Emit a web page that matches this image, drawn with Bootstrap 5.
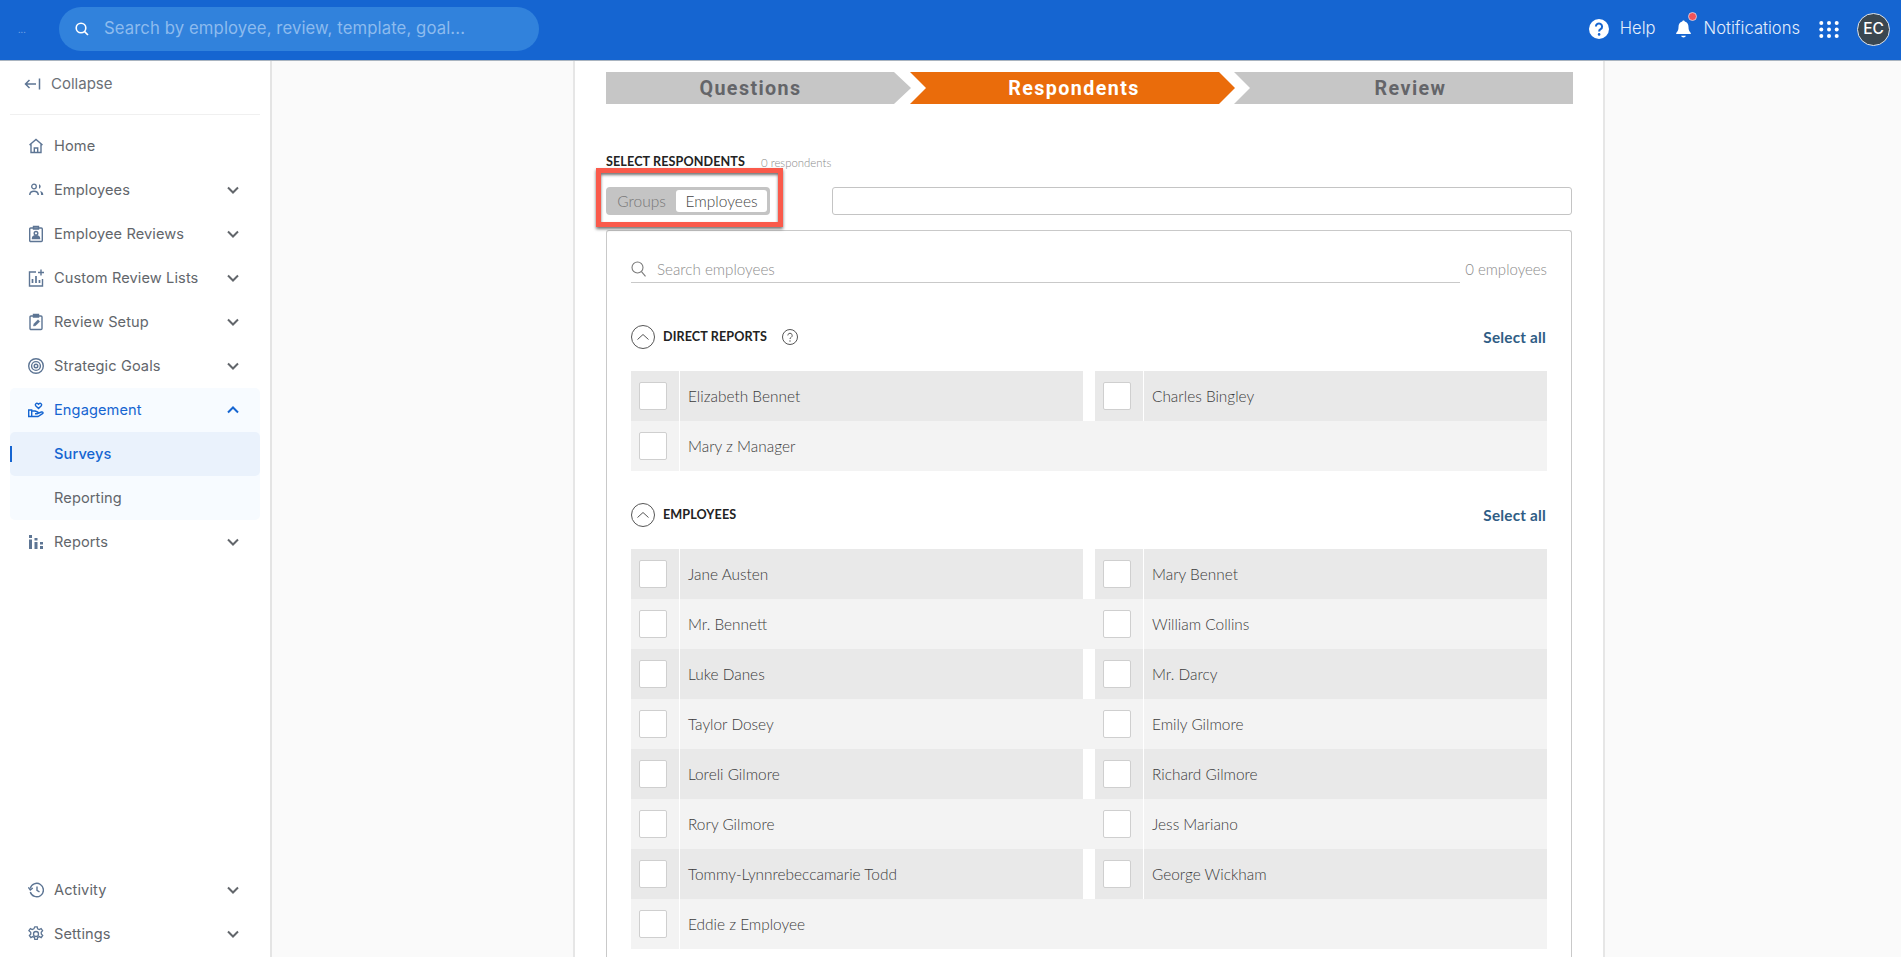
<!DOCTYPE html>
<html lang="en">
<head>
<meta charset="utf-8">
<title>Survey respondents</title>
<link href="https://cdn.jsdelivr.net/npm/bootstrap@5.3.0/dist/css/bootstrap.min.css" rel="stylesheet">
<style>
html,body{height:100%;overflow:hidden}
body{font-family:"Inter","Liberation Sans",sans-serif;background:#fafafa}
.topbar{height:61px;background:#1565d1;border-bottom:1px solid #a9b4c0;padding:0 11px 2px 0;flex-wrap:nowrap}
.logo-dots{width:59px;padding-left:18px;font-size:9px;color:#6f9fe3;line-height:1}
.searchpill{width:480px;height:44px;border-radius:22px;background:#3182dc;padding-left:16px;gap:15px}
.searchpill input{background:transparent;border:0;outline:0;width:420px;padding:0;font-size:16.7px;font-weight:400;color:#fff;letter-spacing:.1px}
.searchpill input::placeholder{color:#8dbbee;opacity:1}
.toplink{color:#e4eefb;font-size:16.6px;font-weight:300;text-decoration:none;position:relative;top:-1px}
.avatar-c{width:33px;height:33px;border-radius:50%;background:#3a4750;border:1px solid #dfe6ee;color:#fff;font-size:15.5px;font-weight:500;line-height:1}
.shell{height:calc(100vh - 61px)}
.sidemenu{width:272px;flex:none;background:#fff;border-right:2px solid #e4e4e4}
.collapse-row{height:54px;margin:0 10px;border-bottom:1px solid #f0f0f0;padding-left:14px;gap:10px;color:#6b7077;font-size:15px;padding-bottom:7px}
.menu-list{margin-top:9px}
.menu-row{height:44px;padding:0 30px 0 28px;color:#62666b;font-size:14.6px;text-decoration:none;gap:10px;letter-spacing:.1px}
.menu-row .ico{width:16px;height:18px;flex:none;color:#5d7594}
.menu-row .lbl{flex:1;padding-top:2px}
.menu-row .chev{width:12px;height:8px;flex:none;margin-right:1px}
.menu-open{background:#f7fbff;border-radius:5px;margin:0 10px}
.menu-open .menu-row{padding:0 20px 0 18px}
.menu-open .menu-row.is-blue,.menu-open .menu-row.is-blue .ico{color:#1565d1}
.menu-open .menu-row.sub-row{padding-left:44px}
.sub-row{position:relative}
.sub-on{background:#eaf2fc;border-radius:5px;color:#1565d1}
.sub-on::before{content:"";position:absolute;left:0;top:14px;width:2px;height:16px;background:#1565d1}
.main-pane{background:#fafafa;min-width:0;overflow:hidden}
.sheet{width:1032px;margin-left:301px;min-height:100%;background:#fff;border-left:2px solid #e6e6e6;border-right:2px solid #e6e6e6;padding:11px 31px 0 31px;font-family:"Lato","Liberation Sans",sans-serif}
.stepper{display:flex;height:32px}
.stepitem{height:32px;display:flex;align-items:center;justify-content:center;font-family:"Roboto","Liberation Sans",sans-serif;font-weight:700;font-size:19.7px;letter-spacing:1.4px;background:#c6c6c6;color:#646569;margin-right:-1px;padding-top:2px}
.st1{width:305px;padding-right:16px;clip-path:polygon(0 0,288px 0,100% 50%,288px 100%,0 100%)}
.st2{width:325px;padding-left:3px;background:#ea6c0b;color:#fff;clip-path:polygon(0 0,309px 0,100% 50%,309px 100%,0 100%,16px 50%)}
.st3{width:339px;padding-left:14px;clip-path:polygon(0 0,100% 0,100% 100%,0 100%,16px 50%)}
.resp-head{margin-top:50px;height:17px;gap:16px}
.resp-title{font-size:12.6px;font-weight:700;color:#222;letter-spacing:.1px;font-family:"Lato",sans-serif}
.resp-count{font-size:11.4px;font-weight:300;color:#8a8a8a}
.chooser{margin-top:16px;height:28px;gap:62px}
.togglewrap{position:relative;width:164px;height:28px;background:#c4c4c4;border-radius:4px;padding:3px;font-size:15.5px;font-weight:300}
.togglewrap .tg-a{width:66px;color:#777;text-align:center;line-height:22px}
.togglewrap .tg-b{width:92px;margin-left:2px;background:#fff;border-radius:3px;color:#444;text-align:center;line-height:22px}
.redbox{position:absolute;left:-10px;top:-19px;width:187px;height:59px;border:5px solid #fa5a4b;box-shadow:0 2px 3px rgba(0,0,0,.55),inset 0 2px 3px rgba(0,0,0,.55);pointer-events:none}
.pickfield{flex:1;height:28px;border:1px solid #c4c4c4;border-radius:3px;background:#fff;box-shadow:none}
.picker{margin-top:15px;border:1px solid #c9c9c9;border-bottom:0;border-radius:3px 3px 0 0;padding:23px 24px 0 24px;height:800px}
.findrow{height:29px;gap:4px}
.findbox{flex:1;border-bottom:1px solid #c9c9c9;gap:11px;height:29px;padding-top:2px}
.findbox input{border:0;outline:0;flex:1;padding:0;font-size:15.2px;font-weight:300;font-family:inherit;background:transparent}
.findbox input::placeholder{color:#8c8c8c;opacity:1}
.findcount{font-size:15px;font-weight:300;color:#8a8a8a;width:83px;text-align:right;white-space:nowrap;padding-top:2px}
.sec-head{height:24px;gap:8px}
.sec-name{font-size:12.6px;font-weight:700;color:#222;letter-spacing:.1px}
.sel-all{font-size:15.3px;font-weight:700;color:#2f5d85;text-decoration:none;letter-spacing:.2px;margin-right:1px}
.sec-a{margin-top:42px}
.sec-b{margin-top:32px}
.people{margin-top:22px}
.people-a{margin-top:22px}
.folk{display:grid;grid-template-columns:452px 452px;column-gap:12px;height:50px}
.folk.lt{background:#f3f3f3}
.folk.dk .who{background:#e9e9e9}
.who{display:flex;align-items:stretch;height:50px}
.tick{width:49px;flex:none;border-right:1px solid #fff;display:flex;align-items:center;padding-left:8px}
.tick i{display:block;width:28px;height:28px;background:#fff;border:1px solid #cfcfcf;border-radius:2px}
.whoname{padding-left:8px;padding-top:2px;font-size:15.4px;font-weight:300;color:#3b3b3b;display:flex;align-items:center}
</style>
</head>
<body>
<nav class="navbar topbar d-flex align-items-center">
  <div class="d-flex align-items-center">
    <div class="logo-dots">...</div>
    <div class="searchpill d-flex align-items-center">
      <svg width="14" height="14" viewBox="0 0 14 14" fill="none" stroke="#fff" stroke-width="1.6"><circle cx="6" cy="6" r="4.8"/><path d="M9.6 9.6 13 13"/></svg>
      <input type="text" placeholder="Search by employee, review, template, goal...">
    </div>
  </div>
  <div class="d-flex align-items-center">
    <svg width="20" height="20" viewBox="0 0 20 20"><circle cx="10" cy="10" r="10" fill="#fff"/><path d="M6.9 7.6a3.1 3.1 0 1 1 4.7 2.6c-1 .6-1.5 1.1-1.5 2.2" fill="none" stroke="#1565d1" stroke-width="2"/><circle cx="10.1" cy="15.4" r="1.3" fill="#1565d1"/></svg>
    <a href="#" class="toplink" style="margin-left:11px">Help</a>
    <span class="position-relative d-inline-flex" style="margin-left:19px">
      <svg width="17" height="20" viewBox="0 0 17 20" fill="#fff"><path d="M8.5 1.5c.7 0 1.2.5 1.3 1.100 2.500.6 3.700 2.900 3.700 5.400 0 3 .8 4.500 2.300 6v1H1.200v-1C2.700 12.500 3.500 11 3.500 8c0-2.500 1.200-4.800 3.700-5.400.1-.6.600-1.100 1.300-1.100z"/><path d="M6.200 16.800h4.600c-.2 1-1.100 1.700-2.300 1.700s-2.100-.7-2.300-1.700z"/></svg>
      <svg class="position-absolute" style="top:-7px;right:-5px" width="9" height="9" viewBox="0 0 9 9"><circle cx="4.500" cy="4.500" r="4" fill="#f0535a" stroke="#e8eefa" stroke-width=".7"/></svg>
    </span>
    <a href="#" class="toplink" style="margin-left:12px">Notifications</a>
    <svg style="margin-left:19px" width="20" height="17" viewBox="0 0 20 17" fill="#fff"><circle cx="2.300" cy="2" r="2"/><circle cx="10" cy="2" r="2"/><circle cx="17.700" cy="2" r="2"/><circle cx="2.300" cy="8.500" r="2"/><circle cx="10" cy="8.500" r="2"/><circle cx="17.700" cy="8.500" r="2"/><circle cx="2.300" cy="15" r="2"/><circle cx="10" cy="15" r="2"/><circle cx="17.700" cy="15" r="2"/></svg>
    <div class="avatar-c d-flex align-items-center justify-content-center" style="margin-left:18px">EC</div>
  </div>
</nav>
<div class="shell d-flex">
  <aside class="sidemenu d-flex flex-column">
    <div class="collapse-row d-flex align-items-center">
      <svg width="17" height="12" viewBox="0 0 17 12" fill="none" stroke="#5d7594" stroke-width="1.500"><path d="M12 6H1.500M5.500 2 1.500 6l4 4M15.500 .5v11"/></svg>
      <span>Collapse</span>
    </div>
    <div class="menu-list flex-grow-1 d-flex flex-column">
      <a href="#" class="menu-row d-flex align-items-center">
        <svg class="ico" viewBox="0 0 16 18" fill="none" stroke="currentColor" stroke-width="1.400"><path d="M1.500 8 8 2.500 14.500 8M3 7v8.500h10V7M6.300 15.500V11h3.400v4.500"/></svg>
        <span class="lbl">Home</span>
      </a>
      <a href="#" class="menu-row d-flex align-items-center">
        <svg class="ico" viewBox="0 0 16 18" fill="currentColor"><circle cx="6" cy="5.500" r="2.300" fill="none" stroke="currentColor" stroke-width="1.300"/><path d="M11 3.300a2.300 2.300 0 0 1 0 4.400z"/><path d="M1 14c0-3 2-4.400 5-4.400s5 1.400 5 4.400h-1.500c0-1.900-1.300-3-3.500-3s-3.500 1.100-3.500 3z"/><path d="M12 10c2 .3 3.300 1.500 3.300 4h-2.200c0-1.700-.4-3-1.100-4z"/></svg>
        <span class="lbl">Employees</span>
        <svg class="chev" viewBox="0 0 12 8" fill="none" stroke="currentColor" stroke-width="2"><path d="m1 1.500 5 5 5-5"/></svg>
      </a>
      <a href="#" class="menu-row d-flex align-items-center">
        <svg class="ico" viewBox="0 0 16 18" fill="none" stroke="currentColor" stroke-width="1.400"><rect x="1.700" y="3" width="12.600" height="13.500" rx="1"/><path d="M5.500 1.500h5V4h-5z"/><circle cx="8" cy="8.300" r="1.800"/><path d="M4.500 13.500h7c0-1.800-1.500-2.800-3.500-2.800s-3.500 1-3.500 2.800z" fill="currentColor"/></svg>
        <span class="lbl">Employee Reviews</span>
        <svg class="chev" viewBox="0 0 12 8" fill="none" stroke="currentColor" stroke-width="2"><path d="m1 1.500 5 5 5-5"/></svg>
      </a>
      <a href="#" class="menu-row d-flex align-items-center">
        <svg class="ico" viewBox="0 0 16 18" fill="none" stroke="currentColor" stroke-width="1.400"><path d="M8 3H1.500v14h13v-7"/><path d="M4.500 14V10M8 14V7M11.500 14v-3" stroke-width="1.700"/><path d="M13 .5v6M10 3.500h6"/></svg>
        <span class="lbl">Custom Review Lists</span>
        <svg class="chev" viewBox="0 0 12 8" fill="none" stroke="currentColor" stroke-width="2"><path d="m1 1.500 5 5 5-5"/></svg>
      </a>
      <a href="#" class="menu-row d-flex align-items-center">
        <svg class="ico" viewBox="0 0 16 18" fill="none" stroke="currentColor" stroke-width="1.400"><rect x="2" y="3" width="12" height="13.500" rx="1"/><path d="M5.500 1.500h5V4h-5z" fill="currentColor"/><path d="m5.500 13 .5-2.200 4-4 1.700 1.700-4 4z" fill="currentColor" stroke-width=".6"/></svg>
        <span class="lbl">Review Setup</span>
        <svg class="chev" viewBox="0 0 12 8" fill="none" stroke="currentColor" stroke-width="2"><path d="m1 1.500 5 5 5-5"/></svg>
      </a>
      <a href="#" class="menu-row d-flex align-items-center">
        <svg class="ico" viewBox="0 0 16 18" fill="none" stroke="currentColor" stroke-width="1.400"><circle cx="8" cy="9" r="7.300"/><circle cx="8" cy="9" r="4.400"/><circle cx="8" cy="9" r="1.800"/></svg>
        <span class="lbl">Strategic Goals</span>
        <svg class="chev" viewBox="0 0 12 8" fill="none" stroke="currentColor" stroke-width="2"><path d="m1 1.500 5 5 5-5"/></svg>
      </a>
      <div class="menu-open">
        <a href="#" class="menu-row is-blue d-flex align-items-center">
          <svg class="ico" viewBox="0 0 16 18" fill="none" stroke="currentColor" stroke-width="1.400"><path d="M10.500 7.500 7.700 4.700c-1.200-1.500.9-3.300 2.300-1.900l.5.500.5-.5c1.400-1.400 3.500.4 2.300 1.900z"/><path d="M.7 9h3v6.500h-3zM3.700 10h3.500l2.300 1c1 .5.600 1.900-.5 1.800H7M9.500 12.500l4-1.500c1.300-.4 2 1 1 1.700l-4.500 2.800H3.700"/></svg>
          <span class="lbl">Engagement</span>
          <svg class="chev" viewBox="0 0 12 8" fill="none" stroke="currentColor" stroke-width="2"><path d="m1 6.500 5-5 5 5"/></svg>
        </a>
        <a href="#" class="menu-row sub-row sub-on d-flex align-items-center"><span class="lbl" style="font-weight:500">Surveys</span></a>
        <a href="#" class="menu-row sub-row d-flex align-items-center"><span class="lbl">Reporting</span></a>
      </div>
      <a href="#" class="menu-row d-flex align-items-center">
        <svg class="ico" viewBox="0 0 16 18" fill="currentColor"><rect x="1" y="2" width="3" height="3"/><rect x="1" y="6.500" width="3" height="9.500"/><rect x="6.500" y="5" width="3" height="2.500"/><rect x="6.500" y="9" width="3" height="7"/><rect x="12" y="9" width="3" height="2.500"/><rect x="12" y="13" width="3" height="3"/></svg>
        <span class="lbl">Reports</span>
        <svg class="chev" viewBox="0 0 12 8" fill="none" stroke="currentColor" stroke-width="2"><path d="m1 1.500 5 5 5-5"/></svg>
      </a>
      <a href="#" class="menu-row d-flex align-items-center mt-auto">
        <svg class="ico" viewBox="0 0 16 18" fill="none" stroke="currentColor" stroke-width="1.400"><path d="M2.300 11A6.700 6.700 0 1 0 2.200 7.500"/><path d="M.3 6.300 2.300 9l2.500-2" /><path d="M9 5.500V9.300l2.500 1.700"/></svg>
        <span class="lbl">Activity</span>
        <svg class="chev" viewBox="0 0 12 8" fill="none" stroke="currentColor" stroke-width="2"><path d="m1 1.500 5 5 5-5"/></svg>
      </a>
      <a href="#" class="menu-row d-flex align-items-center" style="margin-bottom:1px">
        <svg class="ico" viewBox="0 0 16 18" fill="none" stroke="currentColor" stroke-width="1.300"><path d="M6.800 1.800h2.400l.4 2 1.700.8 1.800-1 1.500 2.100-1.400 1.500.1 1.800 1.400 1.500-1.500 2.100-1.800-1-1.700.8-.4 2H6.800l-.4-2-1.700-.8-1.800 1-1.500-2.100 1.400-1.500-.1-1.800L.9 5.700l1.500-2.100 1.800 1 1.700-.8z"/><circle cx="8" cy="9" r="2.500"/></svg>
        <span class="lbl">Settings</span>
        <svg class="chev" viewBox="0 0 12 8" fill="none" stroke="currentColor" stroke-width="2"><path d="m1 1.500 5 5 5-5"/></svg>
      </a>
    </div>
  </aside>
  <main class="main-pane flex-grow-1">
    <div class="sheet">
      <div class="stepper">
        <div class="stepitem st1">Questions</div>
        <div class="stepitem st2">Respondents</div>
        <div class="stepitem st3">Review</div>
      </div>
      <div class="resp-head d-flex align-items-center">
        <span class="resp-title">SELECT RESPONDENTS</span>
        <span class="resp-count">0 respondents</span>
      </div>
      <div class="chooser d-flex">
        <div class="togglewrap d-flex flex-none">
          <div class="tg-a">Groups</div>
          <div class="tg-b">Employees</div>
          <div class="redbox"></div>
        </div>
        <input class="form-control pickfield" type="text" aria-label="Respondents">
      </div>
      <div class="picker">
        <div class="findrow d-flex align-items-center">
          <div class="findbox d-flex align-items-center">
            <svg width="15" height="16" viewBox="0 0 15 16" fill="none" stroke="#7a7a7a" stroke-width="1.100"><circle cx="6.500" cy="6.500" r="5.500"/><path d="m10.500 10.700 4 4.700"/></svg>
            <input type="text" placeholder="Search employees">
          </div>
          <div class="findcount">0 employees</div>
        </div>
        <div class="sec-head sec-a d-flex align-items-center">
          <svg width="24" height="24" viewBox="0 0 24 24" fill="none" stroke="#555" stroke-width="1"><circle cx="12" cy="12" r="11.500"/><path d="m6.500 14.500 5.500-5 5.500 5"/></svg>
          <span class="sec-name">DIRECT REPORTS</span>
          <svg style="margin-left:7px" width="16" height="16" viewBox="0 0 16 16" fill="none" stroke="#555" stroke-width="1"><circle cx="8" cy="8" r="7.500"/><path d="M5.800 6.400a2.200 2.200 0 1 1 3.400 1.900c-.8.500-1.200.8-1.200 1.700"/><circle cx="8" cy="12" r=".7" fill="#555" stroke="none"/></svg>
          <a href="#" class="sel-all ms-auto">Select all</a>
        </div>
        <div class="people-a">
          <div class="folk dk">
            <div class="who"><div class="tick"><i></i></div><div class="whoname">Elizabeth Bennet</div></div>
            <div class="who"><div class="tick"><i></i></div><div class="whoname">Charles Bingley</div></div>
          </div>
          <div class="folk lt">
            <div class="who"><div class="tick"><i></i></div><div class="whoname">Mary z Manager</div></div>
          </div>
        </div>
        <div class="sec-head sec-b d-flex align-items-center">
          <svg width="24" height="24" viewBox="0 0 24 24" fill="none" stroke="#555" stroke-width="1"><circle cx="12" cy="12" r="11.500"/><path d="m6.500 14.500 5.500-5 5.500 5"/></svg>
          <span class="sec-name">EMPLOYEES</span>
          <a href="#" class="sel-all ms-auto">Select all</a>
        </div>
        <div class="people">
          <div class="folk dk">
            <div class="who"><div class="tick"><i></i></div><div class="whoname">Jane Austen</div></div>
            <div class="who"><div class="tick"><i></i></div><div class="whoname">Mary Bennet</div></div>
          </div>
          <div class="folk lt">
            <div class="who"><div class="tick"><i></i></div><div class="whoname">Mr. Bennett</div></div>
            <div class="who"><div class="tick"><i></i></div><div class="whoname">William Collins</div></div>
          </div>
          <div class="folk dk">
            <div class="who"><div class="tick"><i></i></div><div class="whoname">Luke Danes</div></div>
            <div class="who"><div class="tick"><i></i></div><div class="whoname">Mr. Darcy</div></div>
          </div>
          <div class="folk lt">
            <div class="who"><div class="tick"><i></i></div><div class="whoname">Taylor Dosey</div></div>
            <div class="who"><div class="tick"><i></i></div><div class="whoname">Emily Gilmore</div></div>
          </div>
          <div class="folk dk">
            <div class="who"><div class="tick"><i></i></div><div class="whoname">Loreli Gilmore</div></div>
            <div class="who"><div class="tick"><i></i></div><div class="whoname">Richard Gilmore</div></div>
          </div>
          <div class="folk lt">
            <div class="who"><div class="tick"><i></i></div><div class="whoname">Rory Gilmore</div></div>
            <div class="who"><div class="tick"><i></i></div><div class="whoname">Jess Mariano</div></div>
          </div>
          <div class="folk dk">
            <div class="who"><div class="tick"><i></i></div><div class="whoname">Tommy-Lynnrebeccamarie Todd</div></div>
            <div class="who"><div class="tick"><i></i></div><div class="whoname">George Wickham</div></div>
          </div>
          <div class="folk lt">
            <div class="who"><div class="tick"><i></i></div><div class="whoname">Eddie z Employee</div></div>
          </div>
        </div>
      </div>
    </div>
  </main>
</div>
<script src="https://cdn.jsdelivr.net/npm/bootstrap@5.3.0/dist/js/bootstrap.bundle.min.js"></script>
</body>
</html>
